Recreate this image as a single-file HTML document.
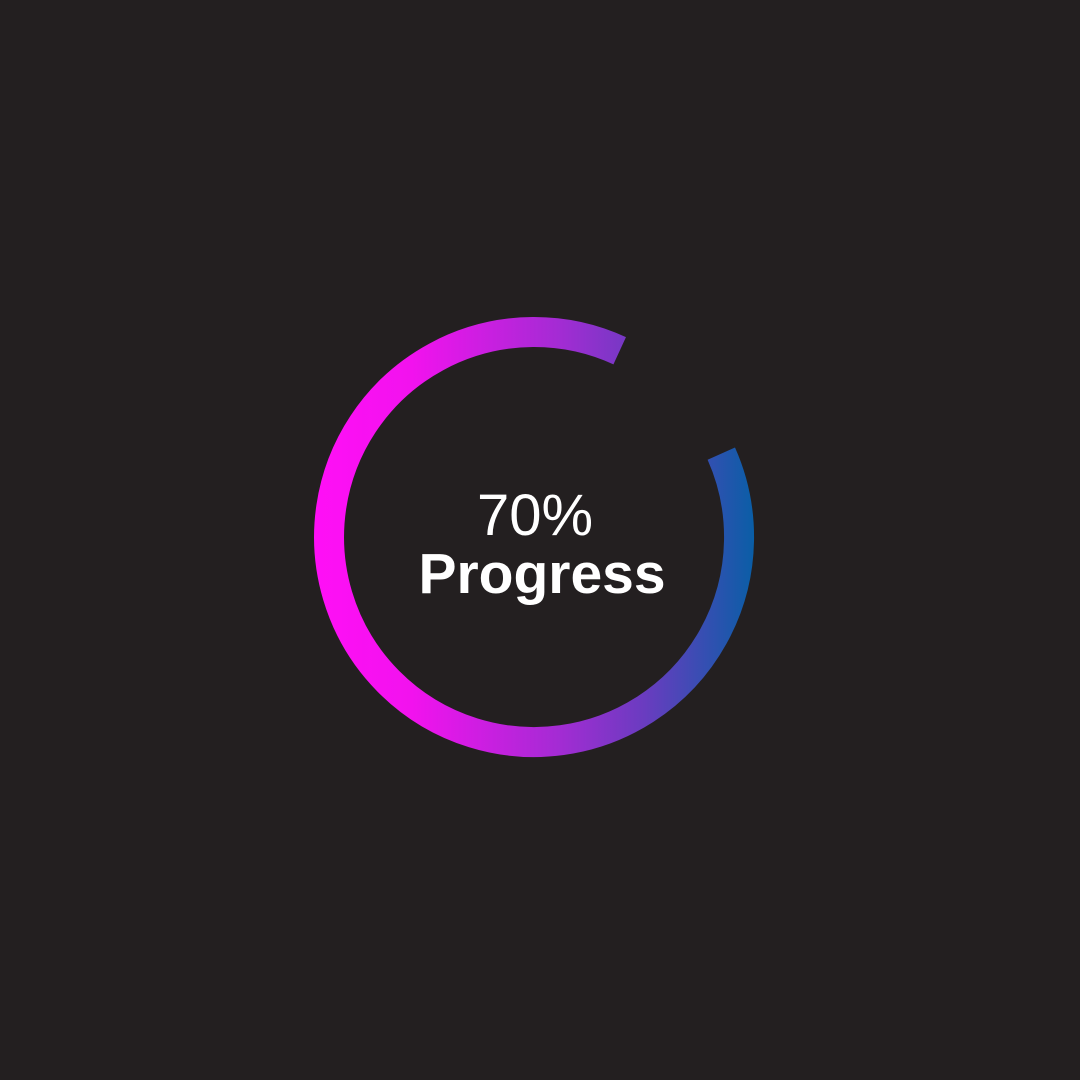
<!DOCTYPE html>
<html><head><style>
html,body{margin:0;padding:0;background:#231f20;}
body{width:1080px;height:1080px;position:relative;overflow:hidden;}
</style></head><body>
<svg width="1080" height="1080" style="position:absolute;left:0;top:0">
<defs>
<linearGradient id="g" gradientUnits="userSpaceOnUse" x1="315" y1="0" x2="754" y2="0">
<stop offset="0" stop-color="#ff0ff6"/>
<stop offset="0.22" stop-color="#f212ee"/>
<stop offset="0.55" stop-color="#a52bd4"/>
<stop offset="0.75" stop-color="#6a3cc0"/>
<stop offset="1" stop-color="#0a5ea6"/>
</linearGradient>
</defs>
<path d="M721.3 453.6 A205 205 0 1 1 619.7 350.8" fill="none" stroke="url(#g)" stroke-width="30" stroke-linecap="butt" stroke-linejoin="round"/>
<text x="535" y="535" text-anchor="middle" font-family="Liberation Sans, sans-serif" font-size="58" fill="#fff">70%</text>
<text x="542" y="593" text-anchor="middle" font-family="Liberation Sans, sans-serif" font-weight="bold" font-size="57" fill="#fff">Progress</text>
</svg>
</body></html>
